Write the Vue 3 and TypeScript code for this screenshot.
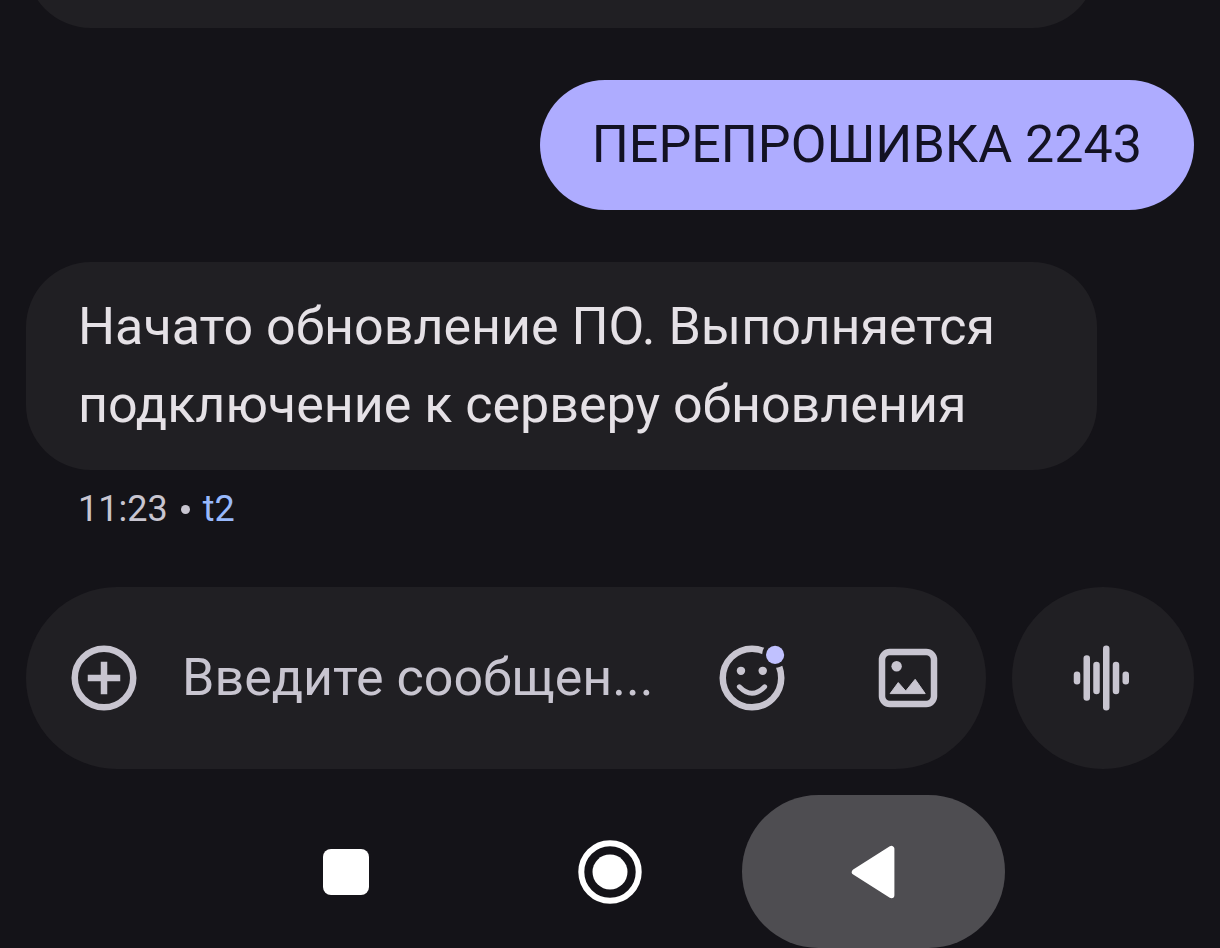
<script setup lang="ts">
import { ref } from 'vue'

const draft = ref('')
const outgoing = 'ПЕРЕПРОШИВКА 2243'
const incoming = 'Начато обновление ПО. Выполняется подключение к серверу обновления'

const bars = [
  { x: 4, top: 11, bottom: 13 },
  { x: 7, top: 6, bottom: 18 },
  { x: 10, top: 8, bottom: 16 },
  { x: 13, top: 3, bottom: 21 },
  { x: 16, top: 8, bottom: 16 },
  { x: 19, top: 11, bottom: 13 },
]
</script>

<template>
  <div class="screen">
    <main class="thread">
      <div class="earlier"><div class="bubble received"></div></div>
      <p class="bubble sent">{{ outgoing }}</p>
      <p class="bubble received">{{ incoming }}</p>
      <div class="meta">
        <time>11:23</time>
        <span class="dot"></span>
        <span class="carrier">t2</span>
      </div>
    </main>

    <form class="composer" @submit.prevent>
      <div class="field">
        <button class="icon" type="button" aria-label="Добавить">
          <svg viewBox="0 0 24 24" fill="none" stroke="currentColor" stroke-width="2">
            <circle cx="12" cy="12" r="9" />
            <path d="M12 7v10M7 12h10" />
          </svg>
        </button>
        <input v-model="draft" type="text" aria-label="Сообщение" placeholder="Введите сообщен..." />
        <div class="tools">
          <button class="icon" type="button" aria-label="Эмодзи">
            <svg viewBox="0 0 24 24" fill="none">
              <mask id="badge-gap">
                <rect width="24" height="24" fill="#fff" />
                <circle cx="19.1" cy="4.9" r="4" fill="#000" />
              </mask>
              <circle cx="12" cy="12" r="9" stroke="currentColor" stroke-width="2" mask="url(#badge-gap)" />
              <circle cx="8.6" cy="9.8" r="1.3" fill="currentColor" />
              <circle cx="15.3" cy="9.8" r="1.3" fill="currentColor" />
              <path d="M8.1 14.7Q12 18.7 15.9 14.7" stroke="currentColor" stroke-width="1.5" stroke-linecap="round" />
              <circle cx="19.1" cy="4.9" r="2.8" fill="#c0c1ff" />
            </svg>
          </button>
          <button class="icon" type="button" aria-label="Галерея">
            <svg viewBox="0 0 24 24" fill="none">
              <rect x="4" y="4" width="16" height="16" rx="2.4" stroke="currentColor" stroke-width="2" />
              <circle cx="8.5" cy="8.4" r="1.6" fill="currentColor" />
              <path d="M6.5 16.8L9 13.4L11.3 16L14.2 12.4L17.3 16.8Z" fill="currentColor" stroke="currentColor" stroke-width=".3" stroke-linejoin="round" />
            </svg>
          </button>
        </div>
      </div>
      <button class="voice" type="button" aria-label="Голосовое сообщение">
        <svg viewBox="0 0 24 24" stroke="currentColor" stroke-width="2" stroke-linecap="round">
          <line v-for="b in bars" :key="b.x" :x1="b.x" :x2="b.x" :y1="b.top" :y2="b.bottom" />
        </svg>
      </button>
    </form>

    <nav class="system">
      <button type="button" aria-label="Недавние">
        <svg viewBox="0 0 80 80" fill="#fff"><rect x="16" y="17" width="46" height="46" rx="8" /></svg>
      </button>
      <button type="button" aria-label="Домой">
        <svg viewBox="0 0 80 80">
          <circle cx="40" cy="40" r="28.7" fill="none" stroke="#fff" stroke-width="6" />
          <circle cx="40" cy="40" r="17.5" fill="#fff" />
        </svg>
      </button>
      <button class="pressed" type="button" aria-label="Назад">
        <svg viewBox="0 0 80 80" fill="#fff" stroke="#fff" stroke-width="6" stroke-linejoin="round">
          <path d="M21.8 40L58.4 16.8V63.2Z" />
        </svg>
      </button>
    </nav>
  </div>
</template>

<style>
html,
body {
  background: #141318;
}
</style>

<style scoped>
.screen {
  display: flex;
  flex-direction: column;
  min-height: 100vh;
  background: #141318;
  color: #c8c5d0;
  font-family: Roboto, "Noto Sans", sans-serif;
}

.thread {
  flex: 1;
  display: flex;
  flex-direction: column;
  padding: 0 26px;
}

.bubble {
  box-sizing: border-box;
  margin: 0;
  padding: 26px 52px;
  border-radius: 65px;
  font-size: 52px;
  line-height: 78px;
}

.received {
  width: 100%;
  max-width: 1071px;
  background: #201f23;
  color: #e5e1e6;
}

.sent {
  align-self: flex-end;
  margin: 52px 0;
  background: #aeacff;
  color: #131223;
}

.earlier {
  display: flex;
  align-items: flex-end;
  height: 28px;
  overflow: hidden;
}

.earlier .bubble {
  flex: none;
  height: 130px;
}

.meta {
  display: flex;
  align-items: center;
  gap: 13px;
  padding: 13px 52px 0;
  font-size: 36px;
  line-height: 52px;
}

.dot {
  width: 9px;
  height: 9px;
  border-radius: 50%;
  background: currentColor;
}

.carrier {
  color: #98b9fc;
}

.composer {
  display: flex;
  gap: 26px;
  padding: 0 26px 26px;
}

.field {
  flex: 1;
  min-width: 0;
  display: flex;
  align-items: center;
  gap: 39px;
  box-sizing: border-box;
  height: 182px;
  padding: 0 39px;
  border-radius: 91px;
  background: #201f23;
}

.tools {
  display: flex;
  gap: 78px;
}

button {
  display: flex;
  align-items: center;
  justify-content: center;
  flex: none;
  margin: 0;
  padding: 0;
  border: 0;
  background: none;
  color: inherit;
}

.icon svg,
.voice svg {
  display: block;
  width: 78px;
  height: 78px;
}

input {
  flex: 1;
  min-width: 0;
  padding: 0;
  border: 0;
  outline: 0;
  background: none;
  color: #e5e1e6;
  font: inherit;
  font-size: 52px;
  line-height: 78px;
}

input::placeholder {
  color: #c8c5d0;
  opacity: 1;
}

.voice {
  width: 182px;
  height: 182px;
  border-radius: 50%;
  background: #201f23;
}

.system {
  display: flex;
  justify-content: center;
}

.system button {
  width: 263px;
  height: 153px;
  border-radius: 77px;
}

.system svg {
  width: 80px;
  height: 80px;
}

.pressed {
  background: #4e4d51;
}
</style>
